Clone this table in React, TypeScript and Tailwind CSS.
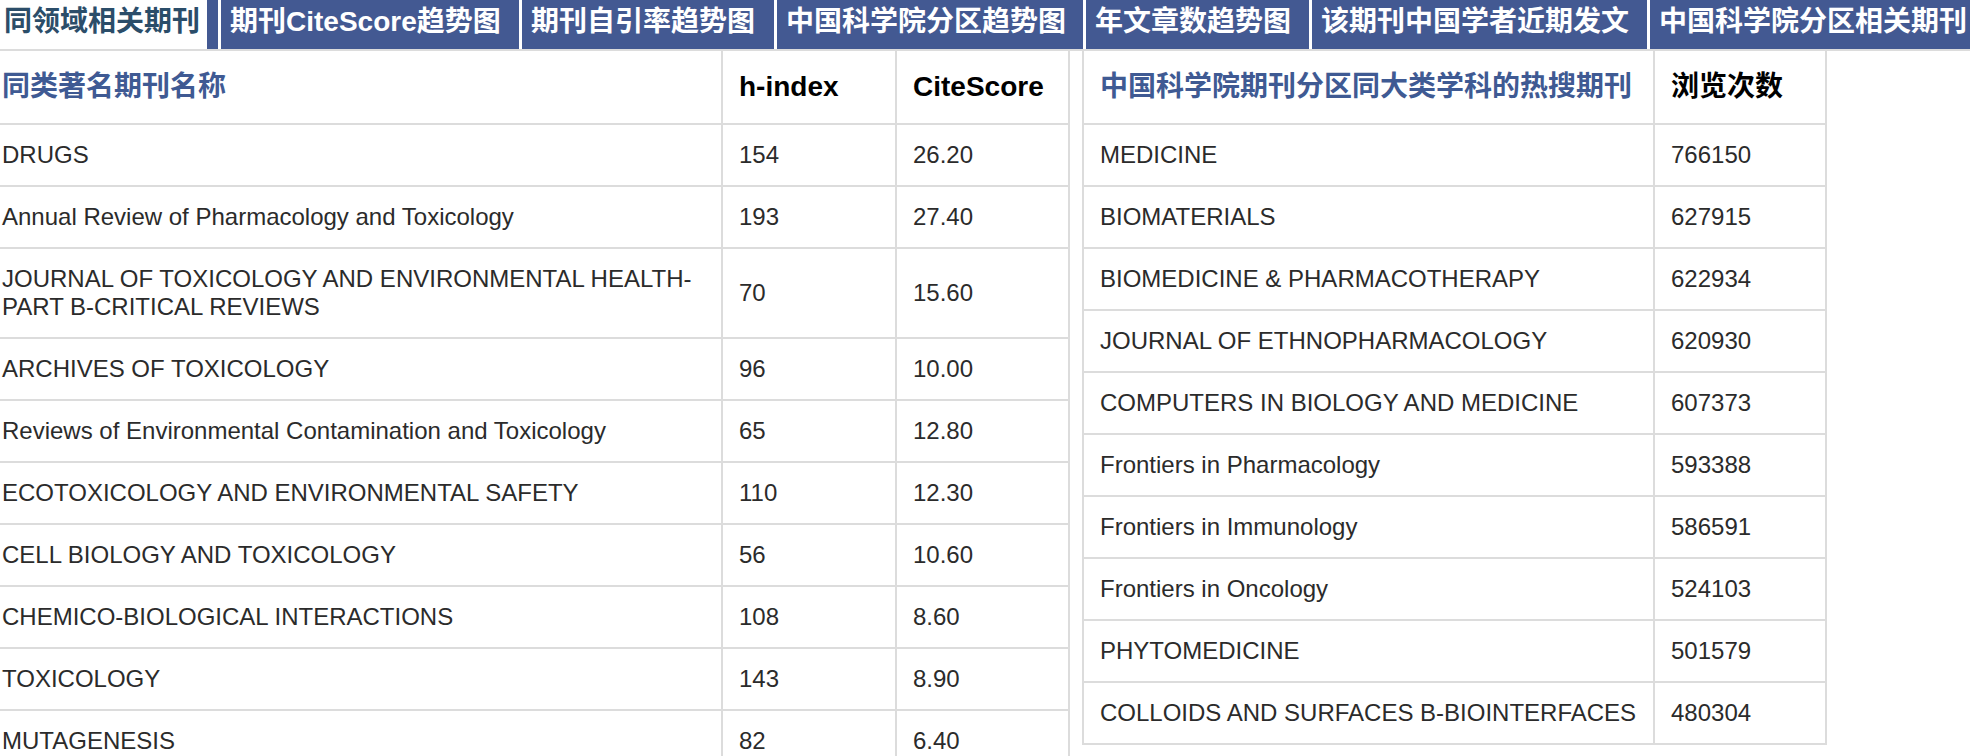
const tabs = [
  { label: '期刊CiteScore趋势图', w: 'w-[301px]' },
  { label: '期刊自引率趋势图', w: 'w-[255px]' },
  { label: '中国科学院分区趋势图', w: 'w-[309px]' },
  { label: '年文章数趋势图', w: 'w-[226px]' },
  { label: '该期刊中国学者近期发文', w: 'w-[338px]' },
  { label: '中国科学院分区相关期刊', w: 'w-[340px]' },
];

const related: [React.ReactNode, string, string][] = [
  ['DRUGS', '154', '26.20'],
  ['Annual Review of Pharmacology and Toxicology', '193', '27.40'],
  [
    <>
      JOURNAL OF TOXICOLOGY AND ENVIRONMENTAL HEALTH-
      <br />
      PART B-CRITICAL REVIEWS
    </>,
    '70',
    '15.60',
  ],
  ['ARCHIVES OF TOXICOLOGY', '96', '10.00'],
  ['Reviews of Environmental Contamination and Toxicology', '65', '12.80'],
  ['ECOTOXICOLOGY AND ENVIRONMENTAL SAFETY', '110', '12.30'],
  ['CELL BIOLOGY AND TOXICOLOGY', '56', '10.60'],
  ['CHEMICO-BIOLOGICAL INTERACTIONS', '108', '8.60'],
  ['TOXICOLOGY', '143', '8.90'],
  ['MUTAGENESIS', '82', '6.40'],
];

const hot: [string, string][] = [
  ['MEDICINE', '766150'],
  ['BIOMATERIALS', '627915'],
  ['BIOMEDICINE & PHARMACOTHERAPY', '622934'],
  ['JOURNAL OF ETHNOPHARMACOLOGY', '620930'],
  ['COMPUTERS IN BIOLOGY AND MEDICINE', '607373'],
  ['Frontiers in Pharmacology', '593388'],
  ['Frontiers in Immunology', '586591'],
  ['Frontiers in Oncology', '524103'],
  ['PHYTOMEDICINE', '501579'],
  ['COLLOIDS AND SURFACES B-BIOINTERFACES', '480304'],
];

function TabBar() {
  return (
    <div className="flex h-[51px] w-full overflow-hidden whitespace-nowrap border-b-2 border-[#dcdcdc] bg-[#435992] text-[28px] font-bold">
      <div className="flex h-full w-[221px] shrink-0 border-r-[3px] border-white pr-[11px]">
        <div className="flex h-full w-full items-center bg-white pb-[6px] pl-1 text-[#2b4d69]">
          同领域相关期刊
        </div>
      </div>
      {tabs.map((t) => (
        <div
          key={t.label}
          className={`flex h-full shrink-0 items-center border-r-[3px] border-white pb-[6px] pl-[9px] text-white ${t.w}`}
        >
          {t.label}
        </div>
      ))}
    </div>
  );
}

function RelatedTable() {
  return (
    <div className="w-[1070px] shrink-0">
      <div className="flex border-b-2 border-[#dcdcdc] text-[28px] font-bold leading-[40px]">
        <div className="flex w-[721px] items-center py-4 pl-[2px] pr-4 text-[#3f5a93]">同类著名期刊名称</div>
        <div className="flex w-[174px] items-center border-l-2 border-[#dcdcdc] px-4 py-4 text-black">h-index</div>
        <div className="flex w-[175px] items-center border-x-2 border-[#dcdcdc] px-4 py-4 text-black">CiteScore</div>
      </div>
      {related.map(([name, h, cs], i) => (
        <div key={i} className="flex border-b-2 border-[#dcdcdc] text-[24px] leading-[28px] text-[#2b2b2b]">
          <div className="flex w-[721px] items-center py-4 pl-[2px] pr-4">{name}</div>
          <div className="flex w-[174px] items-center border-l-2 border-[#dcdcdc] px-4 py-4">{h}</div>
          <div className="flex w-[175px] items-center border-x-2 border-[#dcdcdc] px-4 py-4">{cs}</div>
        </div>
      ))}
    </div>
  );
}

function HotTable() {
  return (
    <div className="ml-3 w-[745px] shrink-0">
      <div className="flex border-b-2 border-[#dcdcdc] text-[28px] font-bold leading-[40px]">
        <div className="flex w-[571px] items-center whitespace-nowrap border-l-2 border-[#dcdcdc] px-4 py-4 text-[#3f5a93]">
          中国科学院期刊分区同大类学科的热搜期刊
        </div>
        <div className="flex w-[174px] items-center border-x-2 border-[#dcdcdc] px-4 py-4 text-black">浏览次数</div>
      </div>
      {hot.map(([name, views]) => (
        <div key={name} className="flex border-b-2 border-[#dcdcdc] text-[24px] leading-[28px] text-[#2b2b2b]">
          <div className="flex w-[571px] items-center whitespace-nowrap border-l-2 border-[#dcdcdc] px-4 py-4">{name}</div>
          <div className="flex w-[174px] items-center border-x-2 border-[#dcdcdc] px-4 py-4">{views}</div>
        </div>
      ))}
    </div>
  );
}

export default function App() {
  return (
    <div className="min-h-[756px] w-full overflow-hidden bg-white font-['Liberation_Sans','Noto_Sans_CJK_SC',sans-serif]">
      <TabBar />
      <div className="flex items-start">
        <RelatedTable />
        <HotTable />
      </div>
    </div>
  );
}
